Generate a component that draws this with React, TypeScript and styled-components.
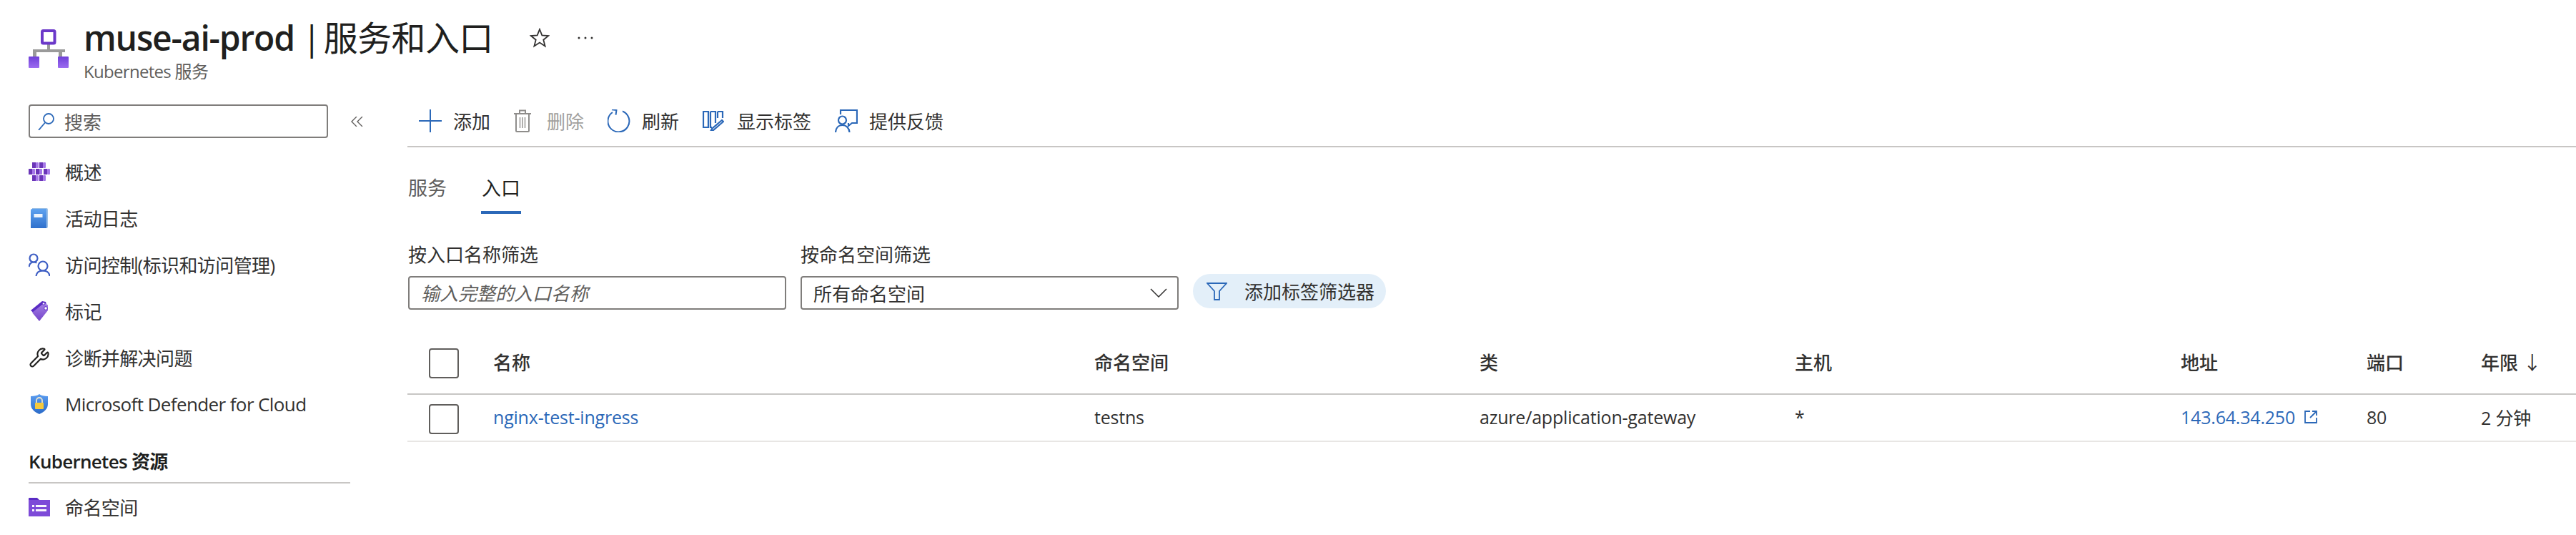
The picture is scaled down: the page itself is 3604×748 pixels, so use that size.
import React from "react";
import styled, { createGlobalStyle } from "styled-components";
import { Wrench } from "lucide-react";

const FONT = `"Open Sans", "Noto Sans CJK SC", sans-serif`;
const BLUE = "#2b68b8";

const Global = createGlobalStyle`
  html, body { margin: 0; padding: 0; background: #fff; }
  body { font-family: ${FONT}; font-size: 26px; color: #323130; }
  * { box-sizing: border-box; }
`;

// Page
const Page = styled.div`
  width: 3604px;
  height: 748px;
  overflow: hidden;
  display: flex;
  flex-direction: column;
`;

const Header = styled.header`
  height: 140px;
  flex: none;
  display: flex;
  padding: 25px 0 0 40px;
`;

const LogoWrap = styled.div`
  width: 77px;
  padding-top: 16px;
  flex: none;
`;

const HeaderText = styled.div`
  display: flex;
  flex-direction: column;
`;

const TitleRow = styled.div`
  display: flex;
  align-items: center;
  height: 56px;
`;

const Title = styled.h1`
  margin: 0;
  font-size: 48px;
  font-weight: 600;
  line-height: 56px;
  color: #201f1e;
  letter-spacing: -1.2px;
  width: 624px;
  white-space: nowrap;
`;

const TitleLight = styled.span`
  font-weight: 400;
  letter-spacing: -0.6px;
  word-spacing: -8px;
`;

const TitleAction = styled.span`
  display: flex;
  width: 67px;
`;

const Subtitle = styled.div`
  margin-top: 4px;
  font-size: 24px;
  line-height: 30px;
  color: #605e5c;
  letter-spacing: -0.7px;
`;

const Body = styled.div`
  flex: 1;
  display: flex;
`;

// Sidebar
const Sidebar = styled.aside`
  width: 570px;
  flex: none;
  padding: 6px 60px 0 40px;
`;

const SearchRow = styled.div`
  display: flex;
  align-items: center;
  justify-content: space-between;
  margin-bottom: 14px;
`;

const SearchBox = styled.div`
  width: 419px;
  height: 47px;
  border: 2px solid #7f7d7b;
  border-radius: 4px;
  display: flex;
  align-items: center;
  gap: 13px;
  padding-left: 11px;
  font-size: 26px;
  color: #605e5c;
`;

const Collapse = styled.span`
  display: flex;
  margin-right: 2px;
`;

const NavItem = styled.div`
  height: 65px;
  display: flex;
  align-items: center;
  font-size: 26px;
  color: #323130;
  letter-spacing: -0.6px;
  white-space: nowrap;
`;

const NavIcon = styled.span`
  width: 51px;
  flex: none;
  display: flex;
`;

const SectionTitle = styled.div`
  height: 79px;
  margin-right: 20px;
  display: flex;
  align-items: flex-end;
  padding-bottom: 11px;
  border-bottom: 2px solid #c8c6c4;
  font-weight: 600;
  font-size: 26px;
  line-height: 36px;
  color: #201f1e;
  letter-spacing: -0.7px;
`;

// Main
const Main = styled.main`
  flex: 1;
  min-width: 0;
`;

const Toolbar = styled.div`
  height: 66px;
  border-bottom: 2px solid #c8c6c4;
  display: flex;
  align-items: center;
  gap: 33px;
  padding: 0 0 6px 16px;
`;

const ToolButton = styled.div<{ $disabled?: boolean; $gap?: number }>`
  display: flex;
  align-items: center;
  gap: ${(p) => p.$gap ?? 16}px;
  font-size: 26px;
  color: ${(p) => (p.$disabled ? "#a19f9d" : "#323130")};
`;

const Tabs = styled.div`
  height: 93px;
  display: flex;
  align-items: flex-end;
  gap: 47px;
`;

const Tab = styled.div<{ $active?: boolean }>`
  width: 56px;
  text-align: center;
  font-size: 27px;
  line-height: 36px;
  padding-bottom: 14px;
  border-bottom: 4px solid ${(p) => (p.$active ? BLUE : "transparent")};
  color: ${(p) => (p.$active ? "#201f1e" : "#605e5c")};
`;

const Filters = styled.div`
  margin-top: 39px;
  display: flex;
  align-items: flex-end;
  gap: 20px;
  padding-left: 1px;
`;

const Field = styled.div`
  display: flex;
  flex-direction: column;
  gap: 12px;
`;

const FieldLabel = styled.label`
  font-size: 26px;
  line-height: 36px;
  color: #323130;
`;

const TextInput = styled.input`
  width: 529px;
  height: 47px;
  border: 2px solid #7f7d7b;
  border-radius: 4px;
  padding: 0 16px;
  font-family: ${FONT};
  font-size: 26px;
  font-style: italic;
  outline: none;
  &::placeholder {
    color: #605e5c;
    opacity: 1;
  }
`;

const SelectBox = styled.div`
  width: 529px;
  height: 47px;
  border: 2px solid #7f7d7b;
  border-radius: 4px;
  padding: 0 14px 0 16px;
  display: flex;
  align-items: center;
  justify-content: space-between;
  font-size: 26px;
  color: #323130;
`;

const Pill = styled.div`
  height: 48px;
  width: 270px;
  margin-bottom: 2px;
  border-radius: 24px;
  background: #e3eff9;
  display: flex;
  align-items: center;
  gap: 24px;
  padding-left: 19px;
  font-size: 26px;
  color: #323130;
`;

const TableHead = styled.div`
  margin-top: 32px;
  height: 87px;
  padding-bottom: 3px;
  border-bottom: 2px solid #c8c6c4;
  display: grid;
  grid-template-columns: 120px 841px 539px 441px 540px 260px 160px 1fr;
  align-items: center;
  font-size: 26px;
  font-weight: 500;
  color: #323130;
`;

const TableRow = styled(TableHead)`
  margin-top: 0;
  height: 66px;
  border-bottom-color: #e8e6e4;
  font-weight: 400;
  font-size: 25px;
  letter-spacing: -0.2px;
`;

const CheckCell = styled.div`
  padding-left: 30px;
  display: flex;
`;

const Check = styled.span<{ $row?: boolean }>`
  width: 42px;
  height: 42px;
  border: 2px solid #605e5c;
  border-radius: 4px;
  margin-top: ${(p) => (p.$row ? "6px" : "3px")};
`;

const LinkText = styled.span`
  color: ${BLUE};
  display: inline-flex;
  align-items: center;
  gap: 13px;
`;

const SortArrow = styled.span`
  font-weight: 400;
`;

// Drawn icons
const KubeLogo = () => (
  <svg width="56" height="54" viewBox="0 0 56 54">
    <defs>
      <linearGradient id="kube" x1="0" y1="0" x2="0" y2="1">
        <stop offset="0" stopColor="#6f3fd8" />
        <stop offset="1" stopColor="#9c6cf0" />
      </linearGradient>
    </defs>
    <path d="M26 20h4v8h-4zM6 28h45v4h-4v6h-5v-6H11v6H6z" fill="#9a9a9a" />
    <rect x="19" y="2" width="17.5" height="17.5" rx="1.5" fill="#fff" stroke="#6b38c9" strokeWidth="4" />
    <rect x="0" y="38" width="15" height="16" rx="1" fill="url(#kube)" />
    <rect x="41" y="38" width="15" height="16" rx="1" fill="url(#kube)" />
  </svg>
);

const StarIcon = () => (
  <svg width="28" height="28" viewBox="0 0 28 28" fill="none" stroke="#323130" strokeWidth="1.8">
    <path d="M14 2l3.3 8.4 9 .6-7 5.7 2.3 8.8-7.6-4.9-7.6 4.9 2.3-8.8-7-5.7 9-.6z" />
  </svg>
);

const DotsIcon = () => (
  <svg width="22" height="4" viewBox="0 0 22 4" fill="#323130">
    <circle cx="2" cy="2" r="1.5" />
    <circle cx="11" cy="2" r="1.5" />
    <circle cx="20" cy="2" r="1.5" />
  </svg>
);

const SearchIcon = () => (
  <svg width="24" height="24" viewBox="0 0 24 24" fill="none" stroke={BLUE} strokeWidth="1.8">
    <circle cx="15" cy="8" r="7" />
    <path d="M10 13.5L1 24" />
  </svg>
);

const CollapseIcon = () => (
  <svg width="17" height="14" viewBox="0 0 17 14" fill="none" stroke="#605e5c" strokeWidth="1.4">
    <path d="M8 0L1 7l7 7M16 0L9 7l7 7" />
  </svg>
);

const OverviewIcon = () => {
  const cubes = [
    [5, 0],
    [15, 0],
    [0, 9],
    [10, 9],
    [21, 9],
    [5, 18],
    [15, 18],
  ];
  return (
    <svg width="30" height="26" viewBox="0 0 30 26">
      {cubes.map(([x, y]) => (
        <g key={`${x}-${y}`}>
          <rect x={x} y={y} width="5" height="8" fill="#6a35b8" />
          <rect x={x + 5} y={y} width="4" height="8" rx="1" fill="#a678e8" />
        </g>
      ))}
    </svg>
  );
};

const BookIcon = () => (
  <svg width="24" height="28" viewBox="0 0 24 28">
    <defs>
      <linearGradient id="book" x1="0" y1="0" x2="0" y2="1">
        <stop offset="0" stopColor="#5fa3f0" />
        <stop offset="1" stopColor="#2f70cc" />
      </linearGradient>
    </defs>
    <path d="M2 0h20a2 2 0 0 1 2 2v24a2 2 0 0 1-2 2h-1V1H2z" fill="#9cc0e6" />
    <path d="M0 3a2 2 0 0 1 2-2h20v27H0z" fill="url(#book)" />
    <rect x="4.5" y="8" width="12" height="5" fill="#fff" opacity="0.9" />
  </svg>
);

const PeopleIcon = () => (
  <svg width="30" height="32" viewBox="0 0 30 32" fill="none" stroke="#3f5fc4" strokeWidth="2.2">
    <circle cx="7" cy="7" r="5.5" />
    <path d="M0.5 19c.6-4 3.2-6.5 7-6.5 1.5 0 2.8.4 3.8 1" />
    <circle cx="20" cy="18" r="6.5" />
    <path d="M10.5 32c.6-5 4-7.5 9.5-7.5s8.9 2.5 9.5 7.5" />
  </svg>
);

const TagIcon = () => (
  <svg width="26" height="28" viewBox="0 0 26 28">
    <defs>
      <linearGradient id="tag" x1="0" y1="0" x2="0" y2="1">
        <stop offset="0" stopColor="#a57fe6" />
        <stop offset="1" stopColor="#7445c9" />
      </linearGradient>
    </defs>
    <path d="M0 13L16 0l5 1 1 4L6 18z" fill="#5a2cc4" />
    <path d="M2 16L19 2.5l5 3v7.5L12 28z" fill="url(#tag)" />
    <circle cx="18" cy="3.5" r="1.7" fill="#fff" stroke="#5a2cc4" />
    <circle cx="21" cy="10" r="2.3" fill="#fff" stroke="#5a2cc4" />
  </svg>
);

const ShieldIcon = () => (
  <svg width="24" height="28" viewBox="0 0 24 28">
    <defs>
      <linearGradient id="shield" x1="0" y1="0" x2="0" y2="1">
        <stop offset="0" stopColor="#5b9df0" />
        <stop offset="1" stopColor="#2a6ac8" />
      </linearGradient>
    </defs>
    <path d="M12 0c3 2.2 7 3 12 3v11c0 6.500-5 11-12 14C5 25 0 20.500 0 14V3c5 0 9-.8 12-3z" fill="url(#shield)" />
    <path d="M8 12V9a4 4 0 0 1 8 0v3" fill="none" stroke="#e8e4d0" strokeWidth="1.8" />
    <rect x="6" y="12" width="12" height="9" rx="1" fill="#f5c93c" />
  </svg>
);

const FolderIcon = () => (
  <svg width="30" height="26" viewBox="0 0 30 26">
    <path d="M0 1a1 1 0 0 1 1-1h11l3 3v2H0z" fill="#5a2cc4" />
    <path d="M0 3h30v23H0z" fill="#7d4ad8" />
    <path d="M5 10h3v3H5zM10 10h15v3H10zM5 16h3v3H5zM10 16h15v3H10z" fill="#fff" opacity="0.95" />
  </svg>
);

const PlusIcon = () => (
  <svg width="32" height="32" viewBox="0 0 32 32" stroke={BLUE} strokeWidth="2">
    <path d="M16 0v32M0 16h32" />
  </svg>
);

const TrashIcon = () => (
  <svg width="24" height="32" viewBox="0 0 24 32" fill="none" stroke="#8f8d8b" strokeWidth="2">
    <path d="M0 6h24M8 6V1.500h8V6M3 6v24a1 1 0 0 0 1 1h16a1 1 0 0 0 1-1V6" />
    <path d="M8.500 11v15M12 11v15M15.500 11v15" strokeWidth="1.400" />
  </svg>
);

const RefreshIcon = () => (
  <svg width="32" height="32" viewBox="0 0 32 32" fill="none" stroke={BLUE} strokeWidth="2">
    <path d="M21 2.500A15 15 0 1 1 7 4" />
    <path d="M5.500 0.500h6.500v6.500" transform="rotate(8 8 4)" />
  </svg>
);

const ColumnsIcon = () => (
  <svg width="30" height="28" viewBox="0 0 30 28" fill="none" stroke={BLUE} strokeWidth="2.200">
    <path d="M1 1h7v22H1zM11 1h7v16M11 1v22h2M21 1h7v9M21 1v9" />
    <path d="M27 13L13 25l-1.500 3 3.500-1L29 15z" />
  </svg>
);

const FeedbackIcon = () => (
  <svg width="32" height="32" viewBox="0 0 32 32" fill="none" stroke={BLUE} strokeWidth="2.200">
    <path d="M8 7V1h23v18h-7l-5 4v-4" />
    <circle cx="10.500" cy="15" r="5.500" />
    <path d="M1 32c.4-6 4-10 9.500-10s9.600 4 10 10" />
  </svg>
);

const ChevronIcon = () => (
  <svg width="24" height="13" viewBox="0 0 24 13" fill="none" stroke="#323130" strokeWidth="1.500">
    <path d="M1 1l11 11L23 1" />
  </svg>
);

const FunnelIcon = () => (
  <svg width="29" height="25" viewBox="0 0 29 25" fill="none" stroke={BLUE} strokeWidth="1.800">
    <path d="M1 1h27L18 12v12h-7V12z" />
  </svg>
);

const ExternalIcon = () => (
  <svg width="18" height="18" viewBox="0 0 18 18" fill="none" stroke={BLUE} strokeWidth="1.800">
    <path d="M8 1H1v16h16v-7M11 1h6v6M17 1L8 10" />
  </svg>
);

const navItems = [
  { icon: <OverviewIcon />, label: "概述" },
  { icon: <BookIcon />, label: "活动日志", inset: true },
  { icon: <PeopleIcon />, label: "访问控制(标识和访问管理)" },
  { icon: <TagIcon />, label: "标记", inset: true },
  { icon: <Wrench size={30} color="#201f1e" strokeWidth={1.700} />, label: "诊断并解决问题" },
  { icon: <ShieldIcon />, label: "Microsoft Defender for Cloud", inset: true },
];

const NavIconSlot = styled(NavIcon)<{ $inset?: boolean }>`
  padding-left: ${(p) => (p.$inset ? "3px" : "0")};
`;

export default function App() {
  return (
    <Page>
      <Global />
      <Header>
        <LogoWrap>
          <KubeLogo />
        </LogoWrap>
        <HeaderText>
          <TitleRow>
            <Title>
              muse-ai-prod <TitleLight>| 服务和入口</TitleLight>
            </Title>
            <TitleAction>
              <StarIcon />
            </TitleAction>
            <TitleAction>
              <DotsIcon />
            </TitleAction>
          </TitleRow>
          <Subtitle>Kubernetes 服务</Subtitle>
        </HeaderText>
      </Header>
      <Body>
        <Sidebar>
          <SearchRow>
            <SearchBox>
              <SearchIcon />
              搜索
            </SearchBox>
            <Collapse>
              <CollapseIcon />
            </Collapse>
          </SearchRow>
          {navItems.map((item) => (
            <NavItem key={item.label}>
              <NavIconSlot $inset={item.inset}>{item.icon}</NavIconSlot>
              {item.label}
            </NavItem>
          ))}
          <SectionTitle>Kubernetes 资源</SectionTitle>
          <NavItem>
            <NavIcon>
              <FolderIcon />
            </NavIcon>
            命名空间
          </NavItem>
        </Sidebar>
        <Main>
          <Toolbar>
            <ToolButton>
              <PlusIcon />
              添加
            </ToolButton>
            <ToolButton $disabled $gap={22}>
              <TrashIcon />
              删除
            </ToolButton>
            <ToolButton>
              <RefreshIcon />
              刷新
            </ToolButton>
            <ToolButton $gap={18}>
              <ColumnsIcon />
              显示标签
            </ToolButton>
            <ToolButton>
              <FeedbackIcon />
              提供反馈
            </ToolButton>
          </Toolbar>
          <Tabs>
            <Tab>服务</Tab>
            <Tab $active>入口</Tab>
          </Tabs>
          <Filters>
            <Field>
              <FieldLabel>按入口名称筛选</FieldLabel>
              <TextInput placeholder="输入完整的入口名称" readOnly />
            </Field>
            <Field>
              <FieldLabel>按命名空间筛选</FieldLabel>
              <SelectBox>
                所有命名空间
                <ChevronIcon />
              </SelectBox>
            </Field>
            <Pill>
              <FunnelIcon />
              添加标签筛选器
            </Pill>
          </Filters>
          <TableHead>
            <CheckCell>
              <Check />
            </CheckCell>
            <div>名称</div>
            <div>命名空间</div>
            <div>类</div>
            <div>主机</div>
            <div>地址</div>
            <div>端口</div>
            <div>
              年限 <SortArrow>↓</SortArrow>
            </div>
          </TableHead>
          <TableRow>
            <CheckCell>
              <Check $row />
            </CheckCell>
            <LinkText>nginx-test-ingress</LinkText>
            <div>testns</div>
            <div>azure/application-gateway</div>
            <div>*</div>
            <LinkText>
              143.64.34.250
              <ExternalIcon />
            </LinkText>
            <div>80</div>
            <div>2 分钟</div>
          </TableRow>
        </Main>
      </Body>
    </Page>
  );
}
